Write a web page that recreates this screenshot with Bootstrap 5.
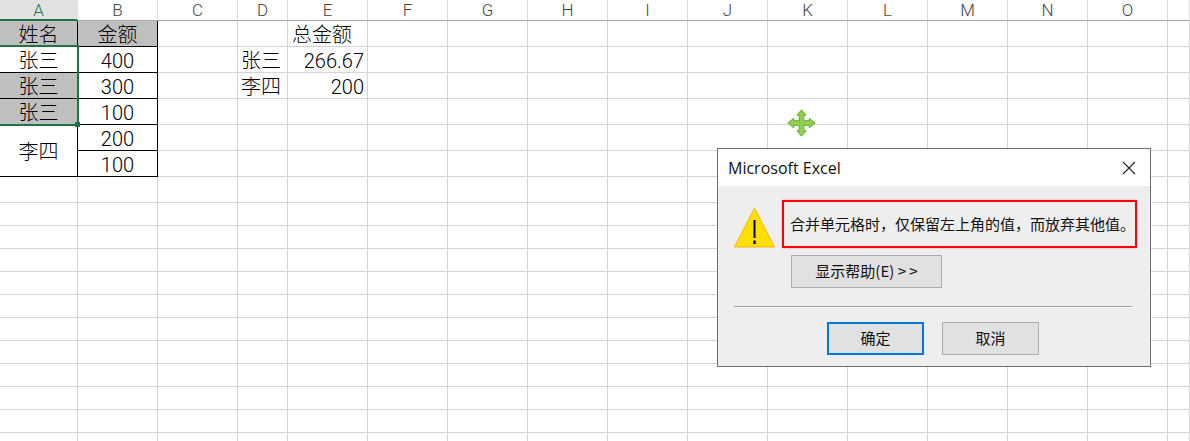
<!DOCTYPE html>
<html lang="zh-CN">
<head>
    <meta charset="UTF-8">
    <meta name="viewport" content="width=device-width, initial-scale=1.0">
    <title>Microsoft Excel</title>
    <link href="https://cdn.jsdelivr.net/npm/bootstrap@5.3.3/dist/css/bootstrap.min.css" rel="stylesheet">
    <style>
        html, body { height: 441px; overflow: hidden; background: #fff; }
        body { position: relative; font-family: Roboto, "Noto Sans CJK SC", sans-serif; color: #000; }

        /* hoja */
        .hoja { table-layout: fixed; border-collapse: separate; border-spacing: 0; width: 1190px; }
        .hoja th, .hoja td { padding: 0; border-right: 1px solid #d4d4d4; border-bottom: 1px solid #d4d4d4; line-height: 1; white-space: nowrap; overflow: hidden; }
        .hoja td { font-size: 20px; font-weight: 300; color: #000; text-align: center; vertical-align: bottom; padding-bottom: 1px; }
        .hoja th { height: 21px; font-size: 17px; font-weight: 300; text-align: center; color: #444; border-right-color: #dedede; border-bottom-color: #a6a6a6; padding-top: 1px; }
        .hoja th.activa { background: #e1e1e1; color: #217346; border-bottom: 2px solid #217346; }
        .fila-alta { height: 26px; }
        .fila-baja { height: 23px; }
        .hoja td.gris { background: #bfbfbf; }
        .hoja td.negro { border-right-color: #000; border-bottom-color: #000; }
        .hoja td.cruza { vertical-align: middle; padding: 3px 0 0 0; }
        .hoja td.corrida { padding-right: 3px; }
        .hoja td.derecha { text-align: right; padding-right: 3px; }
        .hoja td.total { text-align: left; padding-left: 4px; }

        /* seleccion sobre la hoja */
        .seleccion { position: absolute; left: -2px; top: 45px; width: 81px; height: 81px; border: 2px solid #217346; pointer-events: none; }
        .asa { position: absolute; left: 75px; top: 122px; width: 5px; height: 5px; background: #217346; }
        .cursor-mover { position: absolute; left: 787px; top: 109px; }

        /* dialogo */
        .dialogo { position: absolute; left: 717px; top: 148px; width: 434px; height: 219px; background: #eee; border: 1px solid #6e6e6e; font-family: "Noto Sans CJK SC", sans-serif; color: #111; }
        .dialogo-titulo { height: 37px; background: #fff; padding-left: 10px; padding-right: 14px; font-family: "Open Sans", "Noto Sans CJK SC", sans-serif; font-size: 16px; }
        .dialogo-cuerpo { padding: 14px 12px 0 16px; }
        .aviso { width: 355px; height: 48px; border: 2px solid #ff0000; box-shadow: 0 0 1px #ff6060; margin-left: 7px; padding-left: 6px; font-size: 15px; white-space: nowrap; }
        .boton-win { border: 1px solid #adadad; background: #e1e1e1; border-radius: 0; color: #111; font-size: 15px; padding: 0 0 2px 0; height: 33px; line-height: 1; }
        .boton-win:hover { background: #e1e1e1; border-color: #adadad; color: #111; }
        .boton-ayuda { width: 151px; margin: 7px 0 0 57px; display: block; }
        .separador { height: 2px; background: #a0a0a0; border-bottom: 1px solid #fff; margin: 18px 0 14px 0; width: 398px; }
        .boton-fila { padding-left: 93px; gap: 18px; }
        .boton-accion { width: 97px; }
        .boton-foco, .boton-foco:hover { border: 2px solid #0078d7; }
    </style>
</head>
<body>

    <table class="hoja" id="hoja">
        <colgroup>
            <col style="width:78px"><col style="width:80px"><col style="width:80px"><col style="width:50px">
            <col style="width:80px"><col style="width:80px"><col style="width:80px"><col style="width:80px">
            <col style="width:80px"><col style="width:80px"><col style="width:80px"><col style="width:80px">
            <col style="width:80px"><col style="width:80px"><col style="width:80px"><col style="width:22px">
        </colgroup>
        <thead>
            <tr>
                <th class="activa">A</th><th>B</th><th>C</th><th>D</th><th>E</th><th>F</th><th>G</th><th>H</th>
                <th>I</th><th>J</th><th>K</th><th>L</th><th>M</th><th>N</th><th>O</th><th></th>
            </tr>
        </thead>
        <tbody>
            <tr class="fila-alta"><td class="gris negro">姓名</td><td class="gris negro">金额</td><td></td><td></td><td class="total">总金额</td></tr>
            <tr class="fila-alta"><td class="negro">张三</td><td class="negro">400</td><td></td><td class="corrida">张三</td><td class="derecha">266.67</td></tr>
            <tr class="fila-alta"><td class="gris negro">张三</td><td class="negro">300</td><td></td><td class="corrida">李四</td><td class="derecha">200</td></tr>
            <tr class="fila-alta"><td class="gris negro">张三</td><td class="negro">100</td><td></td><td></td><td></td></tr>
            <tr class="fila-alta"><td class="negro cruza" rowspan="2">李四</td><td class="negro">200</td><td></td><td></td><td></td></tr>
            <tr class="fila-alta"><td class="negro">100</td><td></td><td></td><td></td></tr>
            <tr class="fila-alta"><td></td><td></td><td></td><td></td><td></td></tr>
        </tbody>
    </table>

    <div class="seleccion"></div>
    <div class="asa"></div>

    <svg class="cursor-mover" width="29" height="28" viewBox="0 0 29 28">
        <path d="M14.5 .8 19 6.2H16.8V11.7H22.3V9.2L28 14 22.3 18.8V16.3H16.8V21.8H19L14.5 27.2 10 21.8H12.2V16.3H6.7V18.8L1 14 6.7 9.2V11.7H12.2V6.2H10Z" fill="#8fd14f" stroke="#66a82c" stroke-width="1"/>
    </svg>

    <!-- Cuadro de dialogo -->
    <div class="dialogo">
        <div class="dialogo-titulo d-flex justify-content-between align-items-center">
            <span>Microsoft Excel</span>
            <svg width="14" height="14" viewBox="0 0 14 14"><path d="M1 1 13 13M13 1 1 13" stroke="#222" stroke-width="1.1" fill="none"/></svg>
        </div>
        <div class="dialogo-cuerpo">
            <div class="d-flex align-items-end">
                <svg width="41" height="41" viewBox="0 0 41 41" class="flex-shrink-0">
                    <path d="M20.5 1 40.5 40H.5Z" fill="#ffdf00" stroke="#f2b90c" stroke-width="1"/>
                    <path d="M20.5 13V31" stroke="#000" stroke-width="2"/>
                    <path d="M20.5 33.5V37" stroke="#000" stroke-width="2.4"/>
                </svg>
                <div class="aviso d-flex align-items-center">合并单元格时，仅保留左上角的值，而放弃其他值。</div>
            </div>
            <button type="button" class="btn boton-win boton-ayuda">显示帮助(E) &gt; &gt;</button>
            <div class="separador"></div>
            <div class="d-flex boton-fila">
                <button type="button" class="btn boton-win boton-accion boton-foco">确定</button>
                <button type="button" class="btn boton-win boton-accion">取消</button>
            </div>
        </div>
    </div>

    <script>
        // rellena las celdas vacias de la cuadricula
        const cuerpo = document.querySelector("#hoja tbody");
        for (let i = 0; i < 11; i++) {
            const fila = document.createElement("tr");
            fila.className = "fila-baja";
            cuerpo.appendChild(fila);
        }
        Array.from(cuerpo.rows).forEach((fila, i) => {
            let total = fila.cells.length + (i === 5 ? 1 : 0);
            while (total < 16) {
                fila.insertCell();
                total++;
            }
        });
    </script>
    <script src="https://cdn.jsdelivr.net/npm/bootstrap@5.3.3/dist/js/bootstrap.bundle.min.js"></script>
</body>
</html>
